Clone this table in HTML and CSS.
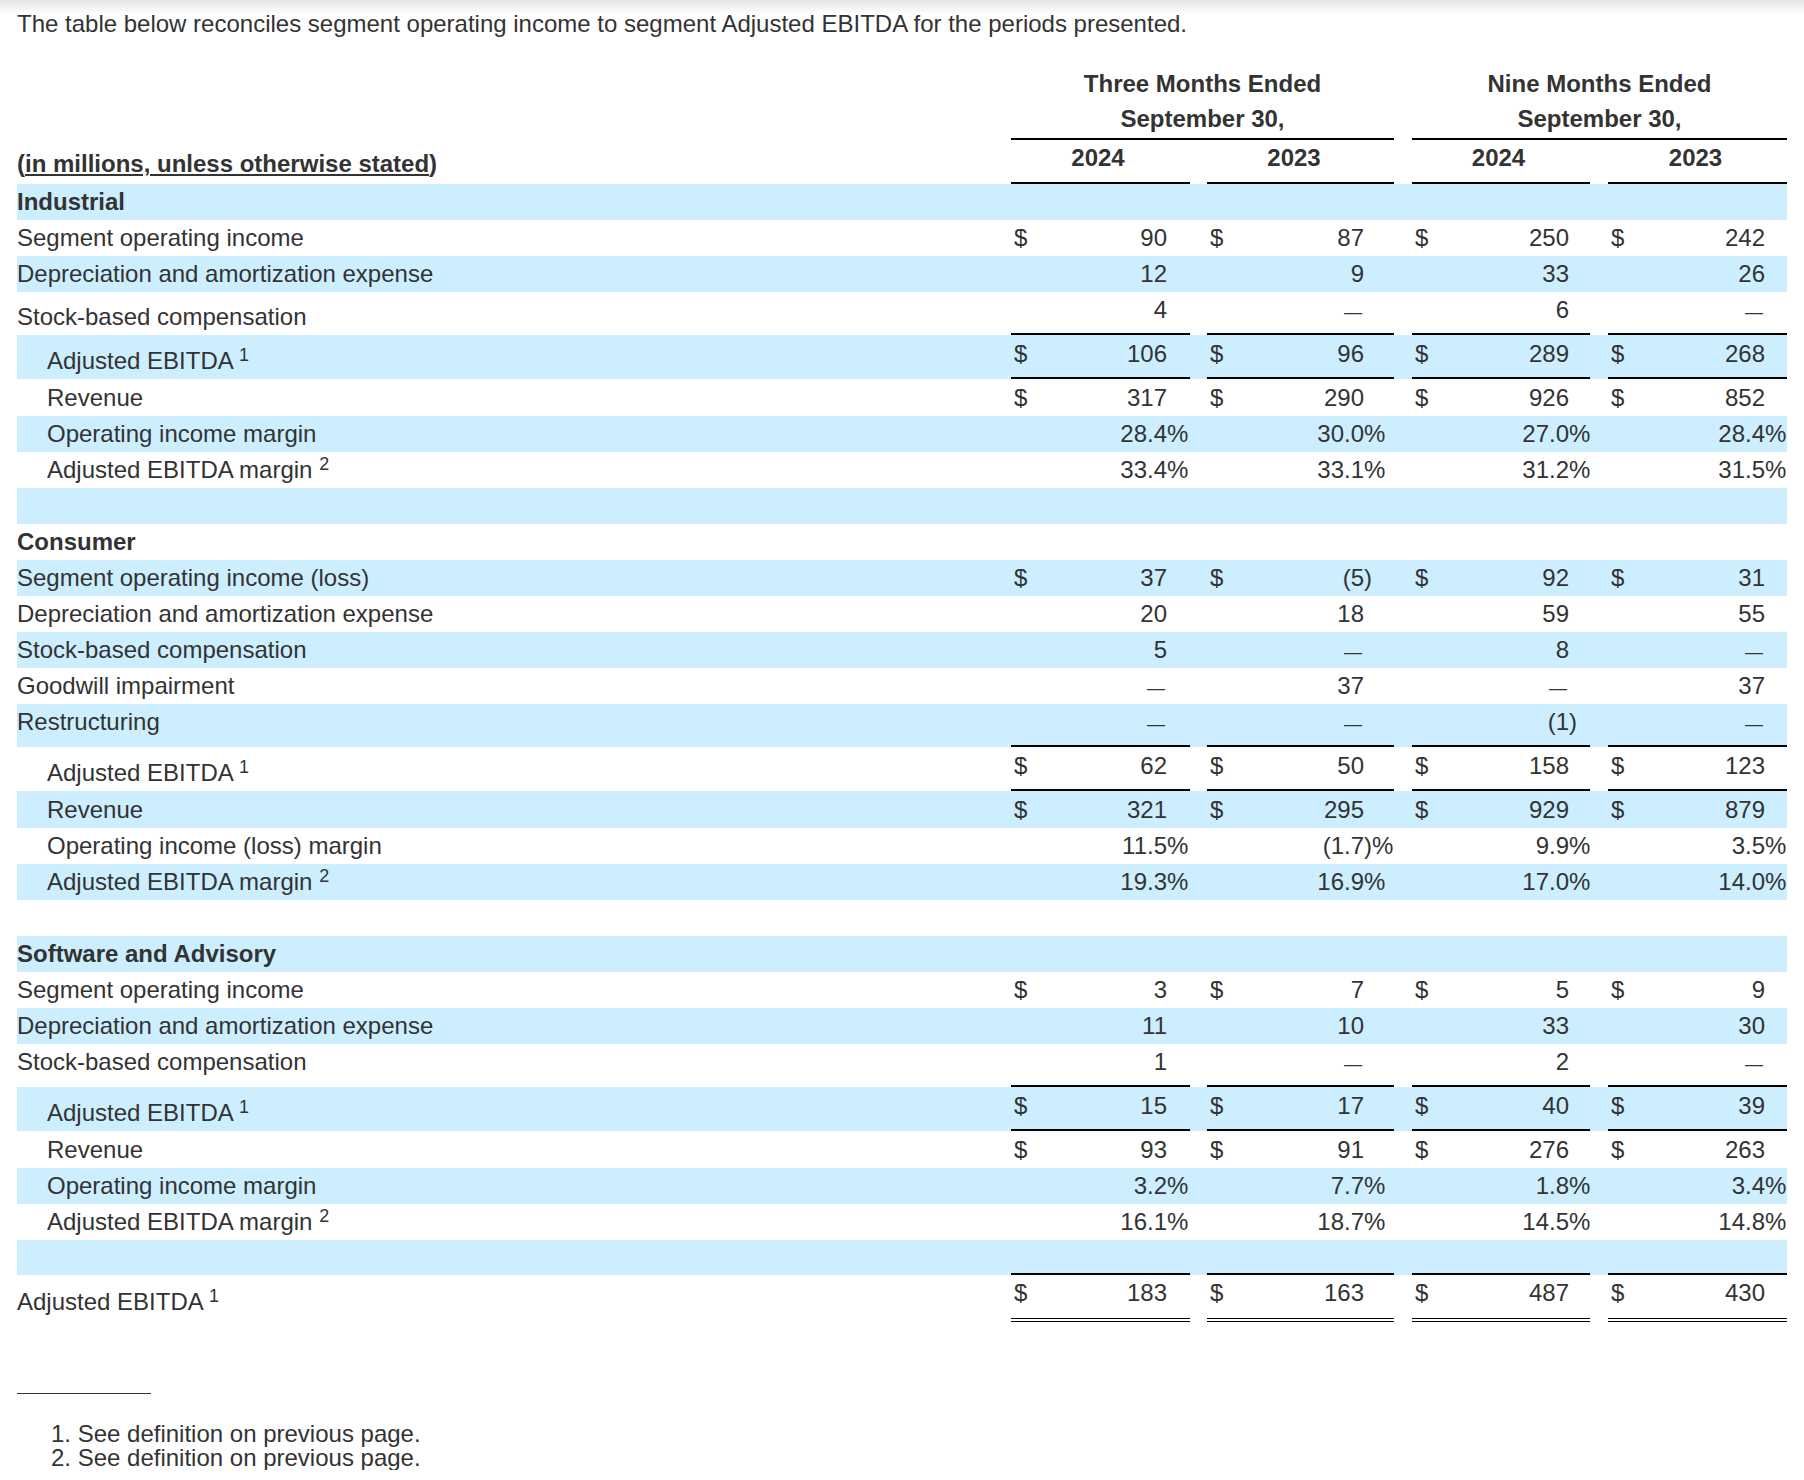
FILE: index.html
```html
<!DOCTYPE html>
<html lang="en">
<head>
<meta charset="utf-8">
<title>Segment Adjusted EBITDA reconciliation</title>
<link rel="stylesheet" href="styles.css">
</head>
<body>
<p class="intro">The table below reconciles segment operating income to segment Adjusted EBITDA for the periods presented.</p>
<table class="fin">
<colgroup>
<col class="c-lbl"><col class="c-cur"><col class="c-numa"><col class="c-sufa"><col class="c-gap1"><col class="c-cur"><col class="c-num"><col class="c-sufb"><col class="c-gap"><col class="c-cur"><col class="c-num"><col class="c-sufc"><col class="c-gap"><col class="c-cur"><col class="c-num"><col class="c-sufd">
</colgroup>
<thead>
<tr class="hr1"><th class="lbl"></th><th colspan="7" class="grp">Three Months Ended</th><th class="gap"></th><th colspan="7" class="grp">Nine Months Ended</th></tr>
<tr class="hr2"><th class="lbl"></th><th colspan="7" class="grp rule">September 30,</th><th class="gap"></th><th colspan="7" class="grp rule">September 30,</th></tr>
<tr class="hr3"><th class="lbl units">(<u>in millions, unless otherwise stated</u>)</th><th colspan="3" class="yr ya">2024</th><th class="gap"></th><th colspan="3" class="yr yb">2023</th><th class="gap"></th><th colspan="3" class="yr yc">2024</th><th class="gap"></th><th colspan="3" class="yr yd">2023</th></tr>
</thead>
<tbody>
<tr class="band"><td class="lbl sec">Industrial</td><td class="cur"></td><td class="num"></td><td class="suf"></td><td class="gap"></td><td class="cur"></td><td class="num"></td><td class="suf"></td><td class="gap"></td><td class="cur"></td><td class="num"></td><td class="suf"></td><td class="gap"></td><td class="cur"></td><td class="num"></td><td class="suf"></td></tr>
<tr><td class="lbl">Segment operating income</td><td class="cur">$</td><td class="num">90</td><td class="suf"></td><td class="gap"></td><td class="cur">$</td><td class="num">87</td><td class="suf"></td><td class="gap"></td><td class="cur">$</td><td class="num">250</td><td class="suf"></td><td class="gap"></td><td class="cur">$</td><td class="num">242</td><td class="suf"></td></tr>
<tr class="band"><td class="lbl">Depreciation and amortization expense</td><td class="cur"></td><td class="num">12</td><td class="suf"></td><td class="gap"></td><td class="cur"></td><td class="num">9</td><td class="suf"></td><td class="gap"></td><td class="cur"></td><td class="num">33</td><td class="suf"></td><td class="gap"></td><td class="cur"></td><td class="num">26</td><td class="suf"></td></tr>
<tr class="pre"><td class="lbl low">Stock-based compensation</td><td class="cur"></td><td class="num">4</td><td class="suf"></td><td class="gap"></td><td class="cur"></td><td class="num"><span class="dash">—</span></td><td class="suf"></td><td class="gap"></td><td class="cur"></td><td class="num">6</td><td class="suf"></td><td class="gap"></td><td class="cur"></td><td class="num"><span class="dash">—</span></td><td class="suf"></td></tr>
<tr class="band sub"><td class="lbl ind low">Adjusted EBITDA <sup>1</sup></td><td class="cur">$</td><td class="num">106</td><td class="suf"></td><td class="gap"></td><td class="cur">$</td><td class="num">96</td><td class="suf"></td><td class="gap"></td><td class="cur">$</td><td class="num">289</td><td class="suf"></td><td class="gap"></td><td class="cur">$</td><td class="num">268</td><td class="suf"></td></tr>
<tr class="after"><td class="lbl ind">Revenue</td><td class="cur">$</td><td class="num">317</td><td class="suf"></td><td class="gap"></td><td class="cur">$</td><td class="num">290</td><td class="suf"></td><td class="gap"></td><td class="cur">$</td><td class="num">926</td><td class="suf"></td><td class="gap"></td><td class="cur">$</td><td class="num">852</td><td class="suf"></td></tr>
<tr class="band"><td class="lbl ind">Operating income margin</td><td class="cur"></td><td class="num">28.4</td><td class="suf">%</td><td class="gap"></td><td class="cur"></td><td class="num">30.0</td><td class="suf">%</td><td class="gap"></td><td class="cur"></td><td class="num">27.0</td><td class="suf">%</td><td class="gap"></td><td class="cur"></td><td class="num">28.4</td><td class="suf">%</td></tr>
<tr><td class="lbl ind">Adjusted EBITDA margin <sup>2</sup></td><td class="cur"></td><td class="num">33.4</td><td class="suf">%</td><td class="gap"></td><td class="cur"></td><td class="num">33.1</td><td class="suf">%</td><td class="gap"></td><td class="cur"></td><td class="num">31.2</td><td class="suf">%</td><td class="gap"></td><td class="cur"></td><td class="num">31.5</td><td class="suf">%</td></tr>
<tr class="band"><td class="lbl">&nbsp;</td><td class="cur"></td><td class="num"></td><td class="suf"></td><td class="gap"></td><td class="cur"></td><td class="num"></td><td class="suf"></td><td class="gap"></td><td class="cur"></td><td class="num"></td><td class="suf"></td><td class="gap"></td><td class="cur"></td><td class="num"></td><td class="suf"></td></tr>
<tr><td class="lbl sec">Consumer</td><td class="cur"></td><td class="num"></td><td class="suf"></td><td class="gap"></td><td class="cur"></td><td class="num"></td><td class="suf"></td><td class="gap"></td><td class="cur"></td><td class="num"></td><td class="suf"></td><td class="gap"></td><td class="cur"></td><td class="num"></td><td class="suf"></td></tr>
<tr class="band"><td class="lbl">Segment operating income (loss)</td><td class="cur">$</td><td class="num">37</td><td class="suf"></td><td class="gap"></td><td class="cur">$</td><td class="num">(5</td><td class="suf">)</td><td class="gap"></td><td class="cur">$</td><td class="num">92</td><td class="suf"></td><td class="gap"></td><td class="cur">$</td><td class="num">31</td><td class="suf"></td></tr>
<tr><td class="lbl">Depreciation and amortization expense</td><td class="cur"></td><td class="num">20</td><td class="suf"></td><td class="gap"></td><td class="cur"></td><td class="num">18</td><td class="suf"></td><td class="gap"></td><td class="cur"></td><td class="num">59</td><td class="suf"></td><td class="gap"></td><td class="cur"></td><td class="num">55</td><td class="suf"></td></tr>
<tr class="band"><td class="lbl">Stock-based compensation</td><td class="cur"></td><td class="num">5</td><td class="suf"></td><td class="gap"></td><td class="cur"></td><td class="num"><span class="dash">—</span></td><td class="suf"></td><td class="gap"></td><td class="cur"></td><td class="num">8</td><td class="suf"></td><td class="gap"></td><td class="cur"></td><td class="num"><span class="dash">—</span></td><td class="suf"></td></tr>
<tr><td class="lbl">Goodwill impairment</td><td class="cur"></td><td class="num"><span class="dash">—</span></td><td class="suf"></td><td class="gap"></td><td class="cur"></td><td class="num">37</td><td class="suf"></td><td class="gap"></td><td class="cur"></td><td class="num"><span class="dash">—</span></td><td class="suf"></td><td class="gap"></td><td class="cur"></td><td class="num">37</td><td class="suf"></td></tr>
<tr class="band pre"><td class="lbl">Restructuring</td><td class="cur"></td><td class="num"><span class="dash">—</span></td><td class="suf"></td><td class="gap"></td><td class="cur"></td><td class="num"><span class="dash">—</span></td><td class="suf"></td><td class="gap"></td><td class="cur"></td><td class="num">(1</td><td class="suf">)</td><td class="gap"></td><td class="cur"></td><td class="num"><span class="dash">—</span></td><td class="suf"></td></tr>
<tr class="sub"><td class="lbl ind low">Adjusted EBITDA <sup>1</sup></td><td class="cur">$</td><td class="num">62</td><td class="suf"></td><td class="gap"></td><td class="cur">$</td><td class="num">50</td><td class="suf"></td><td class="gap"></td><td class="cur">$</td><td class="num">158</td><td class="suf"></td><td class="gap"></td><td class="cur">$</td><td class="num">123</td><td class="suf"></td></tr>
<tr class="band after"><td class="lbl ind">Revenue</td><td class="cur">$</td><td class="num">321</td><td class="suf"></td><td class="gap"></td><td class="cur">$</td><td class="num">295</td><td class="suf"></td><td class="gap"></td><td class="cur">$</td><td class="num">929</td><td class="suf"></td><td class="gap"></td><td class="cur">$</td><td class="num">879</td><td class="suf"></td></tr>
<tr><td class="lbl ind">Operating income (loss) margin</td><td class="cur"></td><td class="num">11.5</td><td class="suf">%</td><td class="gap"></td><td class="cur"></td><td class="num">(1.7</td><td class="suf">)%</td><td class="gap"></td><td class="cur"></td><td class="num">9.9</td><td class="suf">%</td><td class="gap"></td><td class="cur"></td><td class="num">3.5</td><td class="suf">%</td></tr>
<tr class="band"><td class="lbl ind">Adjusted EBITDA margin <sup>2</sup></td><td class="cur"></td><td class="num">19.3</td><td class="suf">%</td><td class="gap"></td><td class="cur"></td><td class="num">16.9</td><td class="suf">%</td><td class="gap"></td><td class="cur"></td><td class="num">17.0</td><td class="suf">%</td><td class="gap"></td><td class="cur"></td><td class="num">14.0</td><td class="suf">%</td></tr>
<tr><td class="lbl">&nbsp;</td><td class="cur"></td><td class="num"></td><td class="suf"></td><td class="gap"></td><td class="cur"></td><td class="num"></td><td class="suf"></td><td class="gap"></td><td class="cur"></td><td class="num"></td><td class="suf"></td><td class="gap"></td><td class="cur"></td><td class="num"></td><td class="suf"></td></tr>
<tr class="band"><td class="lbl sec">Software and Advisory</td><td class="cur"></td><td class="num"></td><td class="suf"></td><td class="gap"></td><td class="cur"></td><td class="num"></td><td class="suf"></td><td class="gap"></td><td class="cur"></td><td class="num"></td><td class="suf"></td><td class="gap"></td><td class="cur"></td><td class="num"></td><td class="suf"></td></tr>
<tr><td class="lbl">Segment operating income</td><td class="cur">$</td><td class="num">3</td><td class="suf"></td><td class="gap"></td><td class="cur">$</td><td class="num">7</td><td class="suf"></td><td class="gap"></td><td class="cur">$</td><td class="num">5</td><td class="suf"></td><td class="gap"></td><td class="cur">$</td><td class="num">9</td><td class="suf"></td></tr>
<tr class="band"><td class="lbl">Depreciation and amortization expense</td><td class="cur"></td><td class="num">11</td><td class="suf"></td><td class="gap"></td><td class="cur"></td><td class="num">10</td><td class="suf"></td><td class="gap"></td><td class="cur"></td><td class="num">33</td><td class="suf"></td><td class="gap"></td><td class="cur"></td><td class="num">30</td><td class="suf"></td></tr>
<tr class="pre"><td class="lbl">Stock-based compensation</td><td class="cur"></td><td class="num">1</td><td class="suf"></td><td class="gap"></td><td class="cur"></td><td class="num"><span class="dash">—</span></td><td class="suf"></td><td class="gap"></td><td class="cur"></td><td class="num">2</td><td class="suf"></td><td class="gap"></td><td class="cur"></td><td class="num"><span class="dash">—</span></td><td class="suf"></td></tr>
<tr class="band sub"><td class="lbl ind low">Adjusted EBITDA <sup>1</sup></td><td class="cur">$</td><td class="num">15</td><td class="suf"></td><td class="gap"></td><td class="cur">$</td><td class="num">17</td><td class="suf"></td><td class="gap"></td><td class="cur">$</td><td class="num">40</td><td class="suf"></td><td class="gap"></td><td class="cur">$</td><td class="num">39</td><td class="suf"></td></tr>
<tr class="after"><td class="lbl ind">Revenue</td><td class="cur">$</td><td class="num">93</td><td class="suf"></td><td class="gap"></td><td class="cur">$</td><td class="num">91</td><td class="suf"></td><td class="gap"></td><td class="cur">$</td><td class="num">276</td><td class="suf"></td><td class="gap"></td><td class="cur">$</td><td class="num">263</td><td class="suf"></td></tr>
<tr class="band"><td class="lbl ind">Operating income margin</td><td class="cur"></td><td class="num">3.2</td><td class="suf">%</td><td class="gap"></td><td class="cur"></td><td class="num">7.7</td><td class="suf">%</td><td class="gap"></td><td class="cur"></td><td class="num">1.8</td><td class="suf">%</td><td class="gap"></td><td class="cur"></td><td class="num">3.4</td><td class="suf">%</td></tr>
<tr><td class="lbl ind">Adjusted EBITDA margin <sup>2</sup></td><td class="cur"></td><td class="num">16.1</td><td class="suf">%</td><td class="gap"></td><td class="cur"></td><td class="num">18.7</td><td class="suf">%</td><td class="gap"></td><td class="cur"></td><td class="num">14.5</td><td class="suf">%</td><td class="gap"></td><td class="cur"></td><td class="num">14.8</td><td class="suf">%</td></tr>
<tr class="band endrule"><td class="lbl">&nbsp;</td><td class="cur"></td><td class="num"></td><td class="suf"></td><td class="gap"></td><td class="cur"></td><td class="num"></td><td class="suf"></td><td class="gap"></td><td class="cur"></td><td class="num"></td><td class="suf"></td><td class="gap"></td><td class="cur"></td><td class="num"></td><td class="suf"></td></tr>
<tr class="total"><td class="lbl lower">Adjusted EBITDA <sup>1</sup></td><td class="cur">$</td><td class="num">183</td><td class="suf"></td><td class="gap"></td><td class="cur">$</td><td class="num">163</td><td class="suf"></td><td class="gap"></td><td class="cur">$</td><td class="num">487</td><td class="suf"></td><td class="gap"></td><td class="cur">$</td><td class="num">430</td><td class="suf"></td></tr>
</tbody>
</table>
<div class="notes">
<div class="note-rule"></div>
<ol class="note-list">
<li>See definition on previous page.</li>
<li>See definition on previous page.</li>
</ol>
</div>
</body>
</html>
```
FILE: styles.css
```css
html {
  background: #fff linear-gradient(#e4e4e4, #ffffff) no-repeat;
  background-size: 100% 14px;
}
body {
  margin: 0;
  padding: 6px 17px 0;
  font-family: "Liberation Sans", Arial, Helvetica, sans-serif;
  font-size: 24px;
  color: #333;
}
.intro {
  margin: 0 0 24px;
  line-height: 36px;
}
.fin {
  border-collapse: separate;
  border-spacing: 0;
  table-layout: fixed;
  width: 1770px;
}
.c-lbl { width: 994px; }
.c-cur { width: 30px; }
.c-numa { width: 126px; }
.c-num { width: 127px; }
.c-sufa { width: 23px; }
.c-sufb { width: 30px; }
.c-sufc { width: 21px; }
.c-sufd { width: 22px; }
.c-gap1 { width: 17px; }
.c-gap { width: 18px; }

.fin th,
.fin td {
  padding: 0;
  line-height: 36px;
  vertical-align: top;
  white-space: nowrap;
  font-weight: normal;
  text-align: left;
}
.fin th.grp,
.fin th.yr {
  font-weight: bold;
  text-align: center;
}
.hr1 th { line-height: 35px; }
.fin th.rule {
  padding-bottom: 1px;
  border-bottom: 2px solid #000;
}
.fin th.yr {
  padding-bottom: 6px;
  border-bottom: 2px solid #000;
}
.fin th.ya { padding-right: 5px; }
.fin th.yb { padding-right: 13px; }
.fin th.yc { padding-right: 5px; }
.fin th.yd { padding-right: 4px; }
.fin th.units {
  font-weight: bold;
  vertical-align: bottom;
  padding-bottom: 2px;
}
.units u {
  text-decoration-thickness: 2px;
  text-underline-offset: 2px;
}

.band td { background: #cceeff; }
.fin td.sec { font-weight: bold; }
.fin td.ind { padding-left: 30px; }
.fin td.cur { padding-left: 3px; }
.fin td.num { text-align: right; }
.fin td.suf { text-align: left; }
.dash {
  font-size: 18px;
  line-height: 0;
  margin-right: 2px;
}

.pre td.cur,
.pre td.num,
.pre td.suf {
  padding-bottom: 5px;
  border-bottom: 2px solid #000;
}
.sub td.cur,
.sub td.num,
.sub td.suf {
  padding-top: 1px;
  padding-bottom: 5px;
  border-bottom: 2px solid #000;
}
.after td { padding-top: 1px; }
.fin td.low { padding-top: 7px; }
.sub td.low { padding-top: 8px; }
.endrule td { line-height: 35px; }
.endrule td.cur,
.endrule td.num,
.endrule td.suf {
  border-bottom: 2px solid #000;
}
.total td.cur,
.total td.num,
.total td.suf {
  padding-bottom: 7px;
  border-bottom: 4px double #000;
}
.fin td.lower { padding-top: 9px; }

sup {
  font-size: 18px;
  line-height: 0;
  vertical-align: 8px;
}

.notes {
  padding-top: 71px;
}
.note-rule {
  width: 134px;
  border-top: 1px solid #333;
}
.note-list {
  margin: 28px 0 0;
  padding: 0 0 0 34px;
  list-style: decimal inside;
  line-height: 24px;
}
```
